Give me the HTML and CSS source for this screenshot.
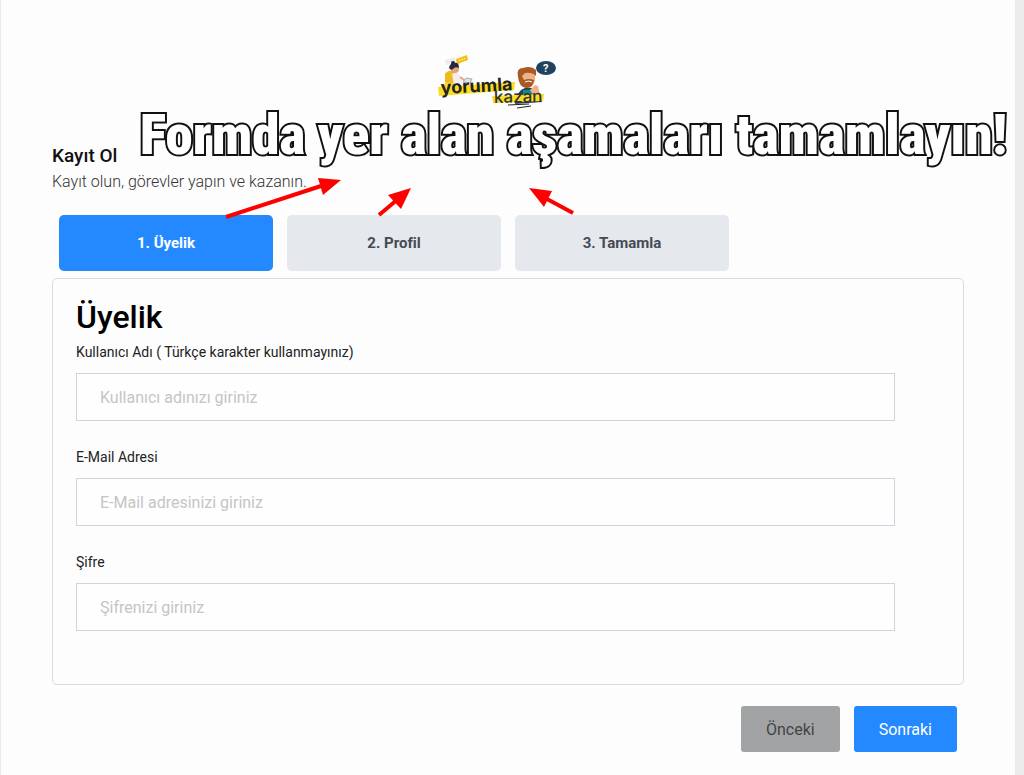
FILE: index.html
```
<!DOCTYPE html>
<html lang="tr">
<head>
    <meta charset="UTF-8">
    <meta name="viewport" content="width=device-width, initial-scale=1.0">
    <title>Kayıt Ol</title>
    <link rel="stylesheet" href="styles.css">
</head>
<body>
<main class="page">
    <div class="logo">
        <svg width="122" height="56" viewBox="0 0 122 56" role="img" aria-label="yorumla kazan">
            <!-- koltukta oturan kadın -->
            <path d="M4 33 L8 31 L8 20 Q11 15 18 17 L22 22 L22 30 L32 33 L32 38 L4 39Z" fill="#eebb1e"/>
            <path d="M8 28 L23 30 L32 34 L32 38 L6 37Z" fill="#f9d43c"/>
            <path d="M8 6 L18 3 L18 8 L9 11Z" fill="#ececec"/>
            <path d="M19 5 L30 1 L31 6 L23 9 L20 12Z" fill="#f5bd16"/>
            <path d="M22 6.500 L28 4.500" stroke="#fff" stroke-dasharray="1.500 1"/>
            <path d="M15 20 Q21 17 23 22 L25 30 L17 31Z" fill="#f4edf0"/>
            <path d="M17 30 L30 29 L33 34 L20 35Z" fill="#fff"/>
            <circle cx="18" cy="15" r="4" fill="#e8a27f"/>
            <path d="M12 14 Q13 9 17 9 Q22 8 22 14 Q18 12 16 15 Q14 17 12 14Z" fill="#252938"/>
            <circle cx="16" cy="9" r="2" fill="#252938"/>
            <path d="M23 23 L27 26 L31 26" fill="none" stroke="#e8a27f" stroke-width="2"/>
            <path d="M26 28 L29 24 L35 25 L33 29Z" fill="#dfe3e8" stroke="#aab"/>
            <!-- düşünen adam -->
            <path d="M78 50 Q80 36 88 34 L98 34 Q104 38 105 48Z" fill="#23445c"/>
            <path d="M86 36 L96 36 L94 46 L86 46Z" fill="#128b83"/>
            <path d="M82 18 Q89 12 98 17 L98 27 Q95 34 88 33 Q83 31 82 25Z" fill="#eeb28b"/>
            <path d="M81 23 Q79 14 86 14 Q94 11 99 16 L99 22 Q95 18 88 19 L85 22 L87 26 Q92 24 97 26 Q96 35 89 34 Q82 33 81 23Z" fill="#a95a23"/>
            <path d="M88 28 Q92 26 95 28" fill="none" stroke="#fff"/>
            <path d="M93 36 L98 31 L101 32 L103 41 L97 42Z" fill="#eeb28b"/>
            <path d="M100 17 L104 10 L109 15Z" fill="#21425f"/>
            <ellipse cx="109" cy="14" rx="10" ry="7" fill="#21425f"/>
            <text class="logo-mark" x="106" y="18">?</text>
            <!-- sarı fırça izleri ve yazı -->
            <path d="M1 33 L78 28 L77 36 L2 42Z" fill="#f8dd20"/>
            <path d="M55 42 L107 40 L106 47 L56 49Z" fill="#f8dd20"/>
            <text class="logo-top" x="4" y="40" transform="rotate(-3 4 40)">yorumla</text>
            <text class="logo-bottom" x="57" y="49" transform="rotate(-1 57 49)">kazan</text>
            <path d="M71 51 L92 50 M80 54 L94 52" stroke="#222" stroke-width="1"/>
        </svg>
    </div>

    <header class="intro">
        <h1>Kayıt Ol</h1>
        <p>Kayıt olun, görevler yapın ve kazanın.</p>
    </header>

    <p class="banner">Formda yer alan aşamaları tamamlayın!</p>
    <svg class="arrows" width="360" height="44" viewBox="0 0 360 44" aria-hidden="true">
        <g stroke="#f00" stroke-width="4">
            <path d="M6 40 L101 9"/>
            <path d="M159 38 L178 22"/>
            <path d="M353 36 L327 22"/>
        </g>
        <g fill="#f00">
            <path d="M121 3 L98 1 L103 18Z"/>
            <path d="M191 11 L168 18 L181 32Z"/>
            <path d="M309 11 L332 14 L324 30Z"/>
        </g>
    </svg>

    <form id="registerForm">
        <nav class="steps">
            <button type="button" class="step active">1. Üyelik</button>
            <button type="button" class="step">2. Profil</button>
            <button type="button" class="step">3. Tamamla</button>
        </nav>

        <section class="panel">
            <h2>Üyelik</h2>
            <div class="form-group">
                <label for="username">Kullanıcı Adı ( Türkçe karakter kullanmayınız)</label>
                <input type="text" id="username" name="username" placeholder="Kullanıcı adınızı giriniz">
            </div>
            <div class="form-group">
                <label for="email">E-Mail Adresi</label>
                <input type="email" id="email" name="email" placeholder="E-Mail adresinizi giriniz">
            </div>
            <div class="form-group">
                <label for="password">Şifre</label>
                <input type="password" id="password" name="password" placeholder="Şifrenizi giriniz">
            </div>
        </section>

        <div class="actions">
            <button type="button" class="btn btn-prev">Önceki</button>
            <button type="submit" class="btn btn-next">Sonraki</button>
        </div>
    </form>
</main>
</body>
</html>
```
FILE: styles.css
```
* {
    box-sizing: border-box;
}

body {
    margin: 0;
    background-color: #ebebeb;
    font-family: Roboto, "Liberation Sans", sans-serif;
    color: #111;
}

.page {
    position: relative;
    min-height: 100vh;
    margin: 0 9px 0 1px;
    padding: 54px 51px 23px;
    background-color: #fdfdfd;
}

.logo {
    display: flex;
    justify-content: center;
    padding-right: 21px;
}

.logo-top {
    font: 700 18px Inter, sans-serif;
    fill: #222;
}

.logo-bottom {
    font: 500 17px Inter, sans-serif;
    fill: #333;
}

.logo-mark {
    font: 700 11px Roboto, sans-serif;
    fill: #fff;
}

.intro {
    padding-top: 32px;
}

.intro h1 {
    margin: 0;
    font-size: 19px;
    font-weight: 500;
    line-height: 28px;
}

.intro p {
    margin: 0;
    font-size: 16px;
    font-weight: 300;
    line-height: 24px;
    color: #333;
}

.banner {
    position: absolute;
    top: 102px;
    left: 139px;
    margin: 0;
    font-family: Impact, "Roboto Condensed", Roboto, sans-serif;
    font-size: 55px;
    font-weight: 900;
    line-height: 66px;
    white-space: nowrap;
    color: #fff;
    -webkit-text-stroke: 4px #111;
    paint-order: stroke fill;
}

.arrows {
    position: absolute;
    top: 177px;
    left: 219px;
}

.steps {
    display: grid;
    grid-template-columns: repeat(4, 1fr);
    padding: 21px 0 7px;
}

.step {
    height: 56px;
    margin: 0 7px;
    border: none;
    border-radius: 5px;
    background-color: #e5e8ec;
    font-family: inherit;
    font-size: 15px;
    font-weight: 700;
    color: #444b54;
    cursor: pointer;
}

.step.active {
    background-color: #2489ff;
    color: #fff;
}

.panel {
    padding: 15px 25px 53px 23px;
    border: 1px solid #dadae4;
    border-radius: 5px;
}

.panel h2 {
    margin: 0;
    font-size: 32px;
    font-weight: 500;
    line-height: 46px;
    color: #000;
}

.form-group {
    width: 95%;
}

.form-group + .form-group {
    margin-top: 24px;
}

label {
    display: block;
    padding-bottom: 8px;
    font-size: 14px;
    line-height: 25px;
    color: #222;
}

input {
    display: block;
    width: 100%;
    height: 48px;
    padding: 0 23px;
    border: 1px solid #d2d2de;
    background-color: #fefefe;
    font-family: inherit;
    font-size: 16px;
}

input::placeholder {
    color: #c5c5c5;
}

.actions {
    display: flex;
    justify-content: flex-end;
    gap: 14px;
    padding: 21px 7px 0;
}

.btn {
    height: 46px;
    padding: 0 25px;
    border: none;
    border-radius: 3px;
    font-family: inherit;
    font-size: 16px;
    cursor: pointer;
}

.btn-prev {
    background-color: #a2a3a4;
    color: #444;
}

.btn-next {
    background-color: #2489ff;
    color: #fff;
}
```
